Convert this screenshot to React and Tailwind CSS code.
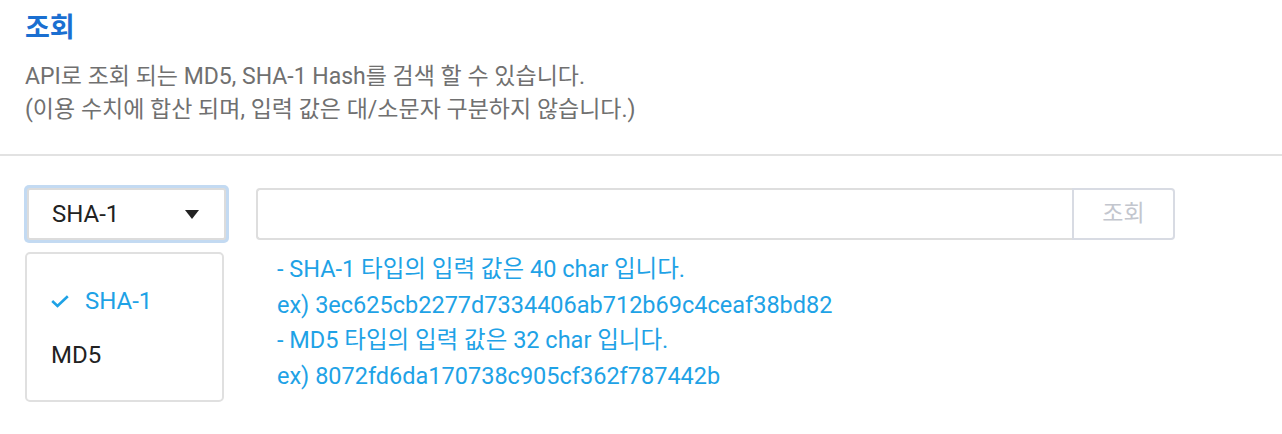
import { useState } from 'react';

const FONT = { fontFamily: 'Roboto, "Noto Sans CJK KR", sans-serif' };

export default function App() {
  const [hashType, setHashType] = useState('SHA-1');
  const [query, setQuery] = useState('');

  return (
    <div className="w-[1282px] h-[434px] bg-white text-[#333]" style={FONT}>
      {/* header */}
      <div className="px-[25px] pt-[9px] pb-[28px] border-b-2 border-[#e2e2e2]">
        <h2 className="text-[27px] font-bold leading-[38px] text-[#1a6fd1]">조회</h2>
        <p className="mt-[13px] text-[23px] leading-[33px] text-[#707070]">
          API로 조회 되는 MD5, SHA-1 Hash를 검색 할 수 있습니다.
          <br />
          (이용 수치에 합산 되며, 입력 값은 대/소문자 구분하지 않습니다.)
        </p>
      </div>

      {/* search */}
      <div className="flex items-start pl-[24px] pt-[29px]">
        <div className="w-[205px] flex flex-col">
          <div className="p-[3px] rounded-[5px] bg-[#c3daf2]">
            <button className="w-full h-[52px] flex items-center justify-between pl-[23px] pr-[25px] bg-white border-2 border-[#dcdcdc] rounded-[3px] text-[24px] text-[#222]">
              <span>{hashType}</span>
              <svg width="14" height="9" viewBox="0 0 14 9">
                <path d="M0 0 L14 0 L7 9 Z" fill="#222" />
              </svg>
            </button>
          </div>
          <ul className="mt-[9px] ml-[1px] w-[199px] h-[150px] border-2 border-[#e0e0e0] rounded-[5px] py-[20px] text-[24px]">
            {['SHA-1', 'MD5'].map((t) => (
              <li
                key={t}
                onClick={() => setHashType(t)}
                className={`h-[54px] flex items-center pl-[24px] cursor-pointer ${t === hashType ? 'text-[#1ea2e6]' : 'text-[#222]'}`}
              >
                {t === hashType && (
                  <svg width="18" height="13" viewBox="0 0 18 13" className="mr-[16px]">
                    <path d="M1.2 6 L6.5 11 L16.8 1.2" fill="none" stroke="#1ea2e6" strokeWidth="2.6" />
                  </svg>
                )}
                {t}
              </li>
            ))}
          </ul>
        </div>

        <div className="ml-[27px] flex flex-col">
          <div className="flex pt-[3px]">
            <input
              value={query}
              onChange={(e) => setQuery(e.target.value)}
              className="w-[816px] h-[52px] border-2 border-r-0 border-[#dedede] rounded-l-[4px] px-3 outline-none text-[20px]"
            />
            <button className="w-[103px] h-[52px] border-2 border-[#d8dbe3] rounded-r-[4px] text-[23px] text-[#c3c6ce]">
              조회
            </button>
          </div>
          <div className="mt-[12px] pl-[21px] text-[23.5px] leading-[35.5px] text-[#1ea2e6]">
            <p>- SHA-1 타입의 입력 값은 40 char 입니다.</p>
            <p>ex) 3ec625cb2277d7334406ab712b69c4ceaf38bd82</p>
            <p>- MD5 타입의 입력 값은 32 char 입니다.</p>
            <p>ex) 8072fd6da170738c905cf362f787442b</p>
          </div>
        </div>
      </div>
    </div>
  );
}
